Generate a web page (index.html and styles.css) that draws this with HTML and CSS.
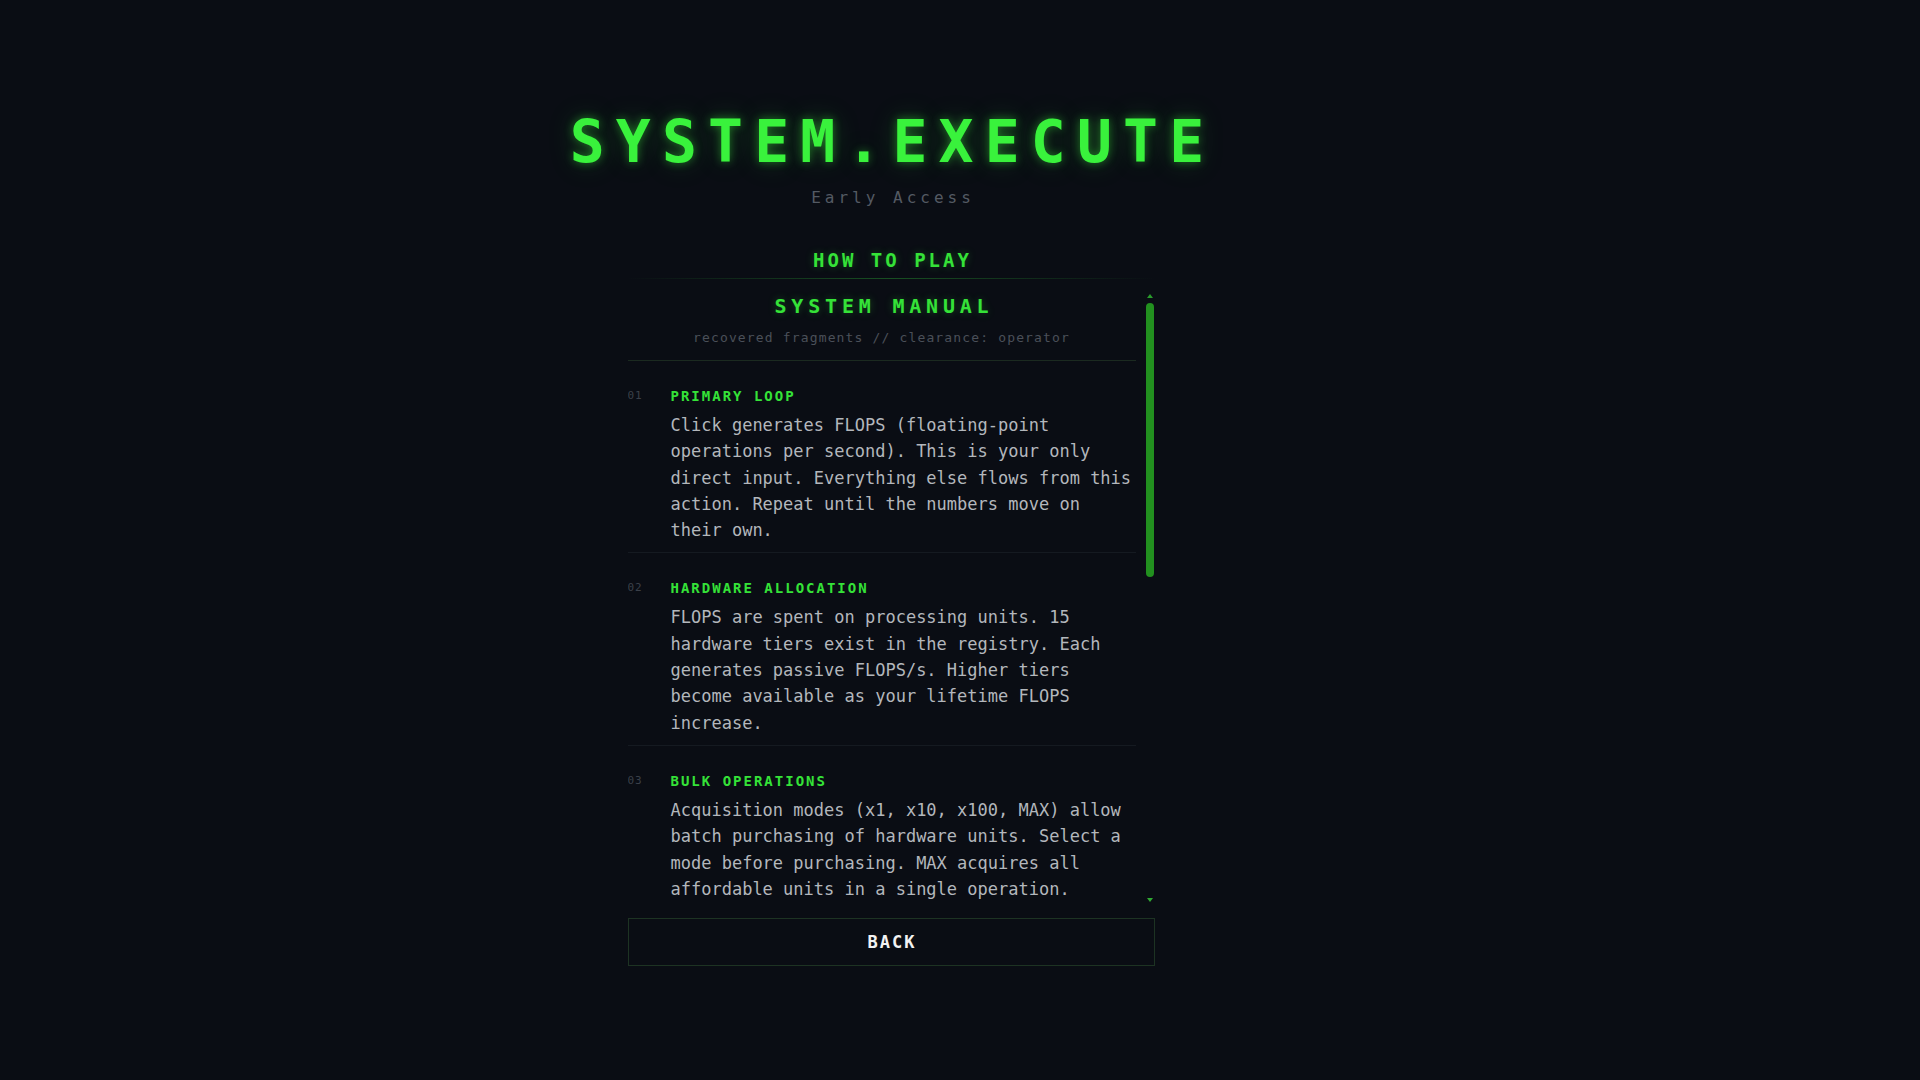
FILE: index.html
```html
<!DOCTYPE html>
<html lang="en">
<head>
<meta charset="utf-8">
<title>SYSTEM.EXECUTE</title>
<link rel="stylesheet" href="styles.css">
</head>
<body>
<main class="page">
  <h1 class="title">SYSTEM.EXECUTE</h1>
  <p class="tagline">Early Access</p>
  <section class="panel">
    <h2 class="section-title">HOW TO PLAY</h2>
    <div class="manual">
      <div class="manual-scroll">
        <header class="manual-head">
          <h3 class="manual-title">SYSTEM MANUAL</h3>
          <p class="manual-sub">recovered fragments // clearance: operator</p>
        </header>
        <article class="entry">
          <span class="entry-num">01</span>
          <div class="entry-body">
            <h4 class="entry-title">PRIMARY LOOP</h4>
            <p class="entry-text">Click generates FLOPS (floating-point operations per second). This is your only direct input. Everything else flows from this action. Repeat until the numbers move on their own.</p>
          </div>
        </article>
        <article class="entry">
          <span class="entry-num">02</span>
          <div class="entry-body">
            <h4 class="entry-title">HARDWARE ALLOCATION</h4>
            <p class="entry-text">FLOPS are spent on processing units. 15 hardware tiers exist in the registry. Each generates passive FLOPS/s. Higher tiers become available as your lifetime FLOPS increase.</p>
          </div>
        </article>
        <article class="entry">
          <span class="entry-num">03</span>
          <div class="entry-body">
            <h4 class="entry-title">BULK OPERATIONS</h4>
            <p class="entry-text">Acquisition modes (x1, x10, x100, MAX) allow batch purchasing of hardware units. Select a mode before purchasing. MAX acquires all affordable units in a single operation.</p>
          </div>
        </article>
        <article class="entry">
          <span class="entry-num">04</span>
          <div class="entry-body">
            <h4 class="entry-title">UPGRADE PROTOCOLS</h4>
            <p class="entry-text">Upgrades permanently modify the output of clicks and hardware. Each protocol can be installed once.</p>
          </div>
        </article>
      </div>
      <div class="scrollbar" aria-hidden="true">
        <span class="sb-btn"><span class="sb-arrow sb-arrow-up"></span></span>
        <span class="sb-track"><span class="sb-thumb"></span></span>
        <span class="sb-btn"><span class="sb-arrow sb-arrow-down"></span></span>
      </div>
    </div>
    <button class="back" type="button">BACK</button>
  </section>
</main>
</body>
</html>
```

FILE: styles.css
```css
html, body {
  margin: 0;
  padding: 0;
  background: #0a0d14;
}

body {
  font-family: "DejaVu Sans Mono", "Liberation Mono", monospace;
  color: #b3b7bc;
}

.page {
  min-height: 100vh;
  box-sizing: border-box;
  padding: 113px 138px 0 0;
  display: flex;
  flex-direction: column;
  align-items: center;
}

.title {
  margin: 0;
  font-size: 58px;
  line-height: 58px;
  font-weight: bold;
  letter-spacing: 11.2px;
  padding-left: 3px;
  color: #39f23c;
  white-space: nowrap;
  text-shadow: 0 0 10px rgba(57, 242, 60, 0.45), 0 0 28px rgba(57, 242, 60, 0.22);
}

.tagline {
  margin: 17px 0 0;
  font-size: 16px;
  line-height: 20px;
  letter-spacing: 4px;
  padding-left: 4px;
  color: #545a63;
}

.panel {
  width: 527px;
  margin-top: 40px;
  display: flex;
  flex-direction: column;
}

.section-title {
  margin: 0;
  padding: 0 0 6px 3px;
  font-size: 19px;
  line-height: 24px;
  font-weight: bold;
  letter-spacing: 3px;
  text-align: center;
  color: #35e238;
  text-shadow: 0 0 8px rgba(53, 226, 56, 0.3);
  border-bottom: 1px solid transparent;
  border-image: linear-gradient(90deg, rgba(40, 160, 50, 0) 0%, rgba(40, 160, 50, 0.45) 50%, rgba(40, 160, 50, 0) 100%) 1;
}

.manual {
  margin-top: 11px;
  height: 616px;
  display: flex;
  gap: 9px;
}

.manual-scroll {
  flex: 1;
  min-width: 0;
  overflow: hidden;
}

.scrollbar {
  width: 10px;
  display: flex;
  flex-direction: column;
}

.sb-btn {
  height: 12px;
  display: flex;
  align-items: center;
  justify-content: center;
}

.sb-arrow {
  width: 0;
  height: 0;
  border-left: 3px solid transparent;
  border-right: 3px solid transparent;
}

.sb-arrow-up {
  border-bottom: 4px solid #2a9c2c;
}

.sb-arrow-down {
  border-top: 4px solid #30aa33;
}

.sb-track {
  flex: 1;
  display: flex;
  flex-direction: column;
  padding: 1px;
}

.sb-thumb {
  height: 274px;
  border-radius: 4px;
  background: #22901f;
}

.manual-head {
  padding: 4px 0 14px;
  border-bottom: 1px solid #1b2a20;
  text-align: center;
}

.manual-title {
  margin: 0;
  padding-left: 5px;
  font-size: 20px;
  line-height: 24px;
  font-weight: bold;
  letter-spacing: 4.8px;
  color: #35e238;
  text-shadow: 0 0 8px rgba(53, 226, 56, 0.3);
}

.manual-sub {
  margin: 12px 0 0;
  font-size: 13px;
  line-height: 16px;
  letter-spacing: 1.15px;
  color: #4a5059;
}

.entry {
  display: grid;
  grid-template-columns: 43px 1fr;
  padding: 25px 0 9px;
  border-bottom: 1px solid #151a21;
}

.entry-num {
  font-size: 11px;
  line-height: 20px;
  letter-spacing: 1px;
  color: #3b4049;
}

.entry-title {
  margin: 0;
  font-size: 14px;
  line-height: 20px;
  font-weight: bold;
  letter-spacing: 2px;
  color: #35e238;
}

.entry-text {
  margin: 6px 0 0;
  font-size: 17px;
  line-height: 26.3px;
  color: #b3b7bc;
}

.back {
  margin-top: 12px;
  height: 48px;
  background: transparent;
  border: 1px solid #1d3323;
  color: #f2f2f2;
  font-family: "DejaVu Sans Mono", "Liberation Mono", monospace;
  font-size: 17px;
  font-weight: bold;
  letter-spacing: 2px;
  padding: 0 0 0 2px;
  cursor: pointer;
}
```
